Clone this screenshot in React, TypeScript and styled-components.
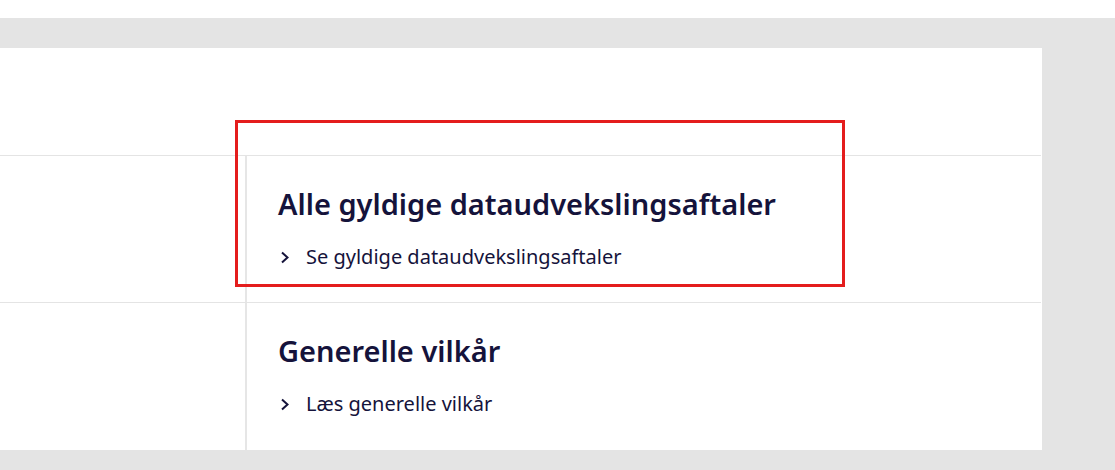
import React from "react";
import styled, { createGlobalStyle } from "styled-components";

const Global = createGlobalStyle`
  html, body { margin: 0; padding: 0; background: #ffffff; }
  body { font-family: "Noto Sans", sans-serif; }
`;

const Page = styled.div`
  margin-top: 18px;
  background: #e4e4e4;
  height: 452px;
  padding-top: 30px;
  box-sizing: border-box;
`;

const Panel = styled.div`
  position: relative;
  width: 1042px;
  background: #ffffff;
  display: flex;
  flex-direction: column;
`;

const Header = styled.div`
  height: 107px;
`;

const Row = styled.div<{ $h: number }>`
  display: grid;
  grid-template-columns: 247px 1fr;
  border-top: 1px solid #e4e4e4;
  box-sizing: border-box;
  height: ${(p) => p.$h}px;
  margin-right: 1px;
`;

const Side = styled.div`
  border-right: 2px solid #e6e6e6;
`;

const Content = styled.div`
  padding: 30px 0 0 31px;
  display: flex;
  flex-direction: column;
  gap: 22px;
`;

const Title = styled.h2`
  margin: 0;
  font-family: "Noto Sans", sans-serif;
  font-weight: 600;
  font-size: 29px;
  line-height: 36px;
  color: #15133b;
`;

const LinkRow = styled.a`
  display: flex;
  align-items: center;
  gap: 16px;
  font-family: "Noto Sans", sans-serif;
  font-size: 20px;
  line-height: 26px;
  color: #15133b;
  text-decoration: none;
  padding-left: 2px;
`;

const Highlight = styled.div`
  position: absolute;
  left: 235px;
  top: 72px;
  width: 610px;
  height: 167px;
  border: 3px solid #e41d1d;
  box-sizing: border-box;
  pointer-events: none;
`;

const Chevron = () => (
  <svg width="10" height="13" viewBox="0 0 10 13" fill="none">
    <path d="M2 1.5 L7.5 6.5 L2 11.5" stroke="#15133b" strokeWidth="2" />
  </svg>
);

export default function App() {
  return (
    <>
      <Global />
      <Page>
        <Panel>
          <Header />
          <Row $h={147}>
            <Side />
            <Content>
              <Title>Alle gyldige dataudvekslingsaftaler</Title>
              <LinkRow href="#">
                <Chevron />
                Se gyldige dataudvekslingsaftaler
              </LinkRow>
            </Content>
          </Row>
          <Row $h={148}>
            <Side />
            <Content>
              <Title>Generelle vilkår</Title>
              <LinkRow href="#">
                <Chevron />
                Læs generelle vilkår
              </LinkRow>
            </Content>
          </Row>
          <Highlight />
        </Panel>
      </Page>
    </>
  );
}
